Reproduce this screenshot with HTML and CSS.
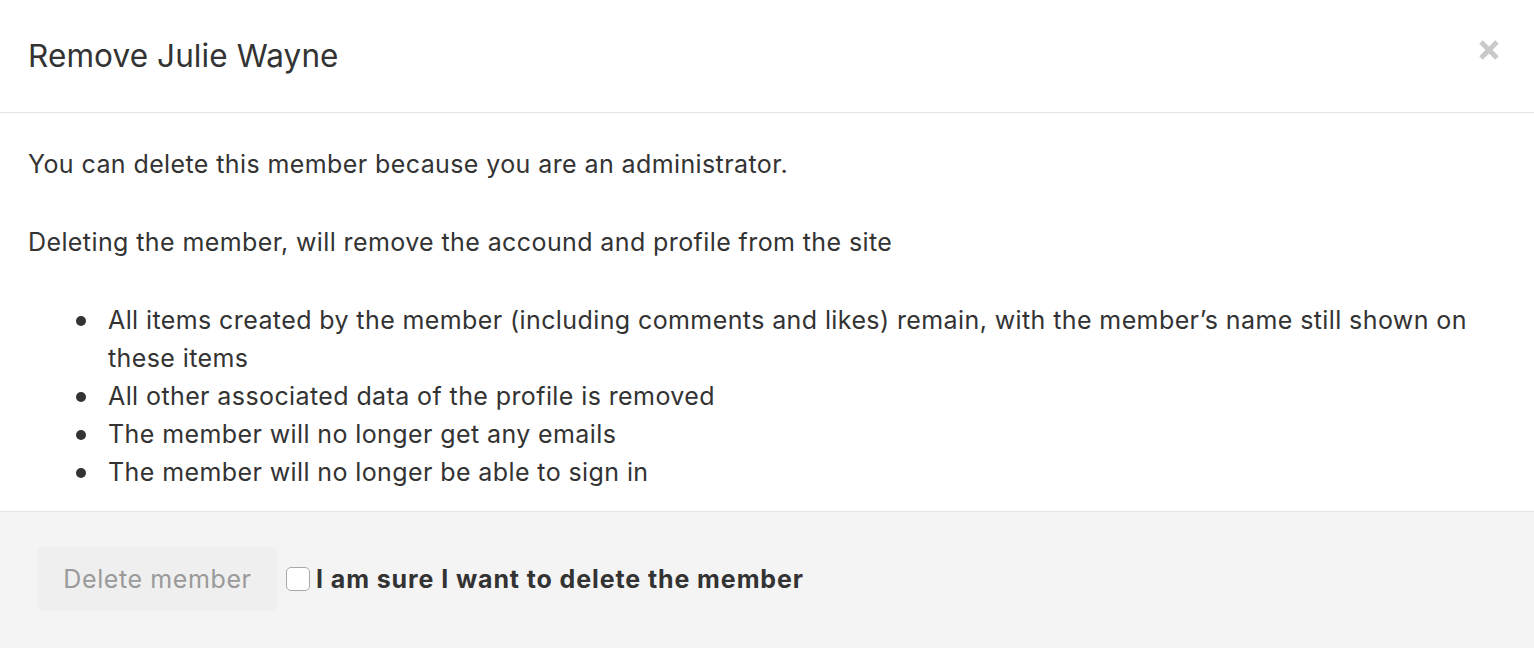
FILE: index.html
```html
<!DOCTYPE html>
<html>
<head>
<meta charset="utf-8">
<link rel="stylesheet" href="styles.css">
</head>
<body>
<div class="modal">
  <div class="modal-header">
    <h1 class="modal-title">Remove Julie Wayne</h1>
    <button class="close" aria-label="Close">
      <svg width="22" height="22" viewBox="0 0 22 22"><path d="M3 3 L19 19 M19 3 L3 19" stroke="#c9c9c9" stroke-width="5" stroke-linecap="butt"/></svg>
    </button>
  </div>
  <div class="modal-body">
    <p>You can delete this member because you are an administrator.</p>
    <p>Deleting the member, will remove the accound and profile from the site</p>
    <ul>
      <li>All items created by the member (including comments and likes) remain, with the member’s name still shown on these items</li>
      <li>All other associated data of the profile is removed</li>
      <li>The member will no longer get any emails</li>
      <li>The member will no longer be able to sign in</li>
    </ul>
  </div>
  <div class="modal-footer">
    <button class="btn-delete" disabled>Delete member</button>
    <label class="confirm"><span class="checkbox"></span><span class="confirm-text">I am sure I want to delete the member</span></label>
  </div>
</div>
</body>
</html>
```

FILE: styles.css
```css
* { box-sizing: border-box; }
html, body { margin: 0; padding: 0; }
body {
  font-family: Inter, "Noto Sans", "Liberation Sans", sans-serif;
  color: #333333;
  background: #ffffff;
  width: 1534px;
  height: 648px;
  overflow: hidden;
}
.modal { display: flex; flex-direction: column; height: 648px; }
.modal-header {
  height: 113px;
  border-bottom: 1px solid #e5e5e5;
  display: flex;
  align-items: center;
  justify-content: space-between;
  padding: 0 34px 0 28px;
}
.modal-title {
  margin: 0;
  font-size: 31.5px;
  font-weight: 400;
  letter-spacing: 0.1px;
  color: #333;
  padding-bottom: 2px;
}
.close {
  border: 0;
  background: transparent;
  padding: 0;
  width: 22px;
  height: 22px;
  margin-bottom: 13px;
}
.close svg { display: block; }
.modal-body {
  padding: 32px 28px 0 28px;
  height: 398px;
  font-size: 25px;
  line-height: 38px;
  letter-spacing: 0.4px;
}
.modal-body p { margin: 0 0 40px 0; }
.modal-body ul { margin: 0; padding-left: 80px; list-style: none; }
.modal-body li { position: relative; }
.modal-body li::before {
  content: "";
  position: absolute;
  left: -32px;
  top: 15px;
  width: 10px;
  height: 10px;
  border-radius: 50%;
  background: #333;
}
.modal-footer {
  flex: 1;
  background: #f4f4f4;
  border-top: 1px solid #e5e5e5;
  display: flex;
  align-items: center;
  padding: 0 38px;
  padding-bottom: 2px;
}
.btn-delete {
  font-family: inherit;
  font-size: 25px;
  letter-spacing: 0.6px;
  color: #9a9a9a;
  background: #efefef;
  border: 0;
  border-radius: 4px;
  width: 239px;
  height: 64px;
  padding: 0;
}
.confirm { display: flex; align-items: center; margin-left: 9px; }
.checkbox {
  width: 24px;
  height: 24px;
  border: 1px solid #a9a9a9;
  border-radius: 5px;
  background: #fff;
  margin-right: 6px;
}
.confirm-text {
  font-size: 25px;
  font-weight: 700;
  letter-spacing: 0.9px;
  color: #333;
}
```
